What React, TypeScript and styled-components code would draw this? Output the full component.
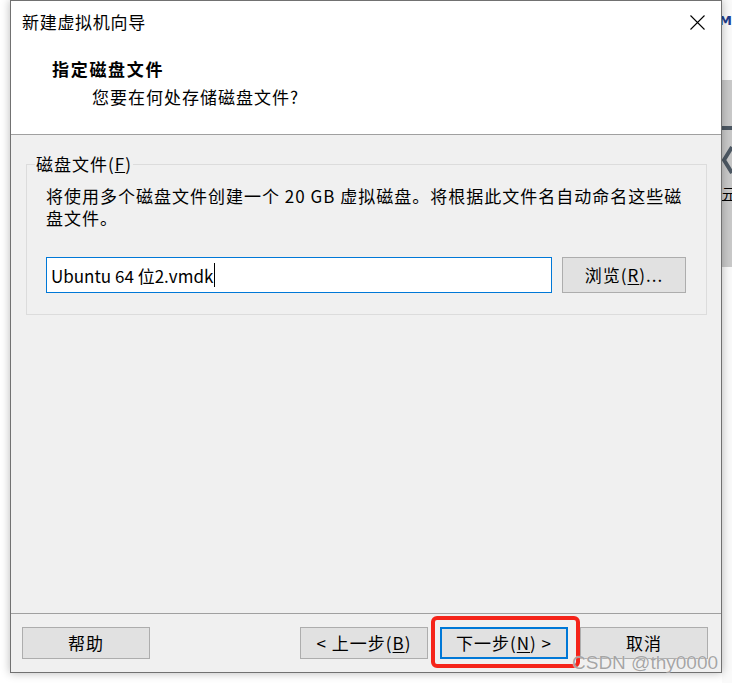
import React from "react";
import styled, { createGlobalStyle } from "styled-components";

const Global = createGlobalStyle`
  html, body { margin: 0; padding: 0; background: #ffffff; }
  body { font-family: "Noto Sans CJK SC", "Noto Sans", sans-serif; color: #000; }
  * { box-sizing: border-box; }
`;

const Page = styled.div`
  display: flex;
  width: 732px;
  height: 683px;
  padding-left: 10px;
  background: #ffffff;
  overflow: hidden;
`;

const Window = styled.div`
  position: relative;
  z-index: 1;
  flex: none;
  display: flex;
  flex-direction: column;
  width: 712px;
  height: 673px;
  border: 1px solid #717171;
  background: #f0f0f0;
  box-shadow: 0 0 9px rgba(0, 0, 0, 0.28);
`;

const Header = styled.header`
  flex: none;
  height: 134px;
  background: #ffffff;
  border-bottom: 1px solid #a0a0a0;
  display: flex;
  flex-direction: column;
`;

const TitleBar = styled.div`
  height: 42px;
  display: flex;
  align-items: center;
  justify-content: space-between;
  padding: 0 16px 0 11px;
`;

const TitleText = styled.div`
  font-size: 17px;
  letter-spacing: 0.7px;
  line-height: 42px;
`;

const CloseIcon = styled.svg`
  width: 15px;
  height: 15px;
  display: block;
`;

const StepTitle = styled.div`
  margin: 14px 0 0 41px;
  font-size: 17px;
  font-weight: 700;
  letter-spacing: 1.7px;
  line-height: 24px;
`;

const StepSubtitle = styled.div`
  margin: 4px 0 0 81px;
  font-size: 17px;
  letter-spacing: 1px;
  line-height: 24px;
`;

const Content = styled.main`
  flex: 1;
  padding: 29px 14px 0 15px;
`;

const Group = styled.section`
  display: flex;
  flex-direction: column;
  border: 1px solid #dcdcdc;
  padding: 0 19px 21px 19px;
`;

const GroupLabel = styled.div`
  align-self: flex-start;
  margin: -12px 0 0 -11px;
  padding: 0 1px;
  background: #f0f0f0;
  font-size: 17px;
  letter-spacing: 1px;
  line-height: 22px;
`;

const Description = styled.p`
  margin: 10px 0 0 0;
  font-size: 17px;
  letter-spacing: 1px;
  line-height: 22px;
  white-space: nowrap;
`;

const InputRow = styled.div`
  display: flex;
  gap: 10px;
  margin-top: 28px;
`;

const FileInput = styled.div`
  display: flex;
  align-items: center;
  width: 506px;
  height: 36px;
  padding-left: 4px;
  background: #ffffff;
  border: 1px solid #0078d7;
  font-size: 17px;
  white-space: nowrap;
`;

const Caret = styled.span`
  display: inline-block;
  width: 1px;
  height: 24px;
  margin-left: 1px;
  background: #000;
`;

const Button = styled.button<{ $width: number; $height: number; $primary?: boolean }>`
  flex: none;
  width: ${(p) => p.$width}px;
  height: ${(p) => p.$height}px;
  padding: 0;
  background: #e1e1e1;
  border: ${(p) => (p.$primary ? "2px solid #0078d7" : "1px solid #adadad")};
  font-family: "Noto Sans CJK SC", "Noto Sans", sans-serif;
  font-size: 17px;
  letter-spacing: 1px;
  color: #000;
  line-height: 20px;
  display: flex;
  align-items: center;
  justify-content: center;
  white-space: nowrap;
  u { text-underline-offset: 2px; }
`;

const Footer = styled.footer`
  flex: none;
  height: 59px;
  border-top: 1px solid #a0a0a0;
  display: flex;
  align-items: flex-start;
  gap: 12px;
  padding: 13px 13px 0 11px;
`;

const Spacer = styled.div`
  flex: 1;
`;

const Highlight = styled.div`
  position: absolute;
  left: 420px;
  top: 615px;
  width: 149px;
  height: 52px;
  border: 4px solid #f5241a;
  border-radius: 6px;
  pointer-events: none;
`;

const Watermark = styled.div`
  position: absolute;
  left: 561px;
  top: 651px;
  font-family: "Liberation Sans", Arial, sans-serif;
  font-size: 19px;
  line-height: 22px;
  color: rgba(150, 150, 150, 0.85);
  text-shadow: 0 0 1px rgba(255, 255, 255, 0.9);
  white-space: nowrap;
  pointer-events: none;
`;

const Backdrop = styled.aside`
  flex: 1;
  display: flex;
  flex-direction: column;
  overflow: hidden;
  background: #fafafa;
`;

const BackdropLogo = styled.div`
  margin-top: 13px;
  height: 15px;
  font-family: "DejaVu Sans", sans-serif;
  font-weight: 700;
  font-size: 13px;
  line-height: 15px;
  color: #1f3d8c;
  text-indent: -3px;
  white-space: nowrap;
`;

const BackdropPanel = styled.div`
  margin-top: 52px;
  height: 187px;
  background: #c9c9c9;
  display: flex;
  flex-direction: column;
`;

const BackdropBar = styled.div`
  margin-top: 46px;
  height: 4px;
  background: #4d5863;
`;

const BackdropChevron = styled.svg`
  display: block;
  margin-top: 14px;
  width: 10px;
  height: 32px;
`;

const BackdropText = styled.div`
  margin-top: 8px;
  font-size: 14px;
  line-height: 18px;
  white-space: nowrap;
  text-decoration: underline;
`;

export default function App() {
  return (
    <>
      <Global />
      <Page>
        <Window>
          <Header>
            <TitleBar>
              <TitleText>新建虚拟机向导</TitleText>
              <CloseIcon viewBox="0 0 15 15">
                <path d="M0.5 0.5 L14.5 14.5 M14.5 0.5 L0.5 14.5" stroke="#000" strokeWidth="1.1" fill="none" />
              </CloseIcon>
            </TitleBar>
            <StepTitle>指定磁盘文件</StepTitle>
            <StepSubtitle>您要在何处存储磁盘文件?</StepSubtitle>
          </Header>
          <Content>
            <Group>
              <GroupLabel>
                磁盘文件(<u>F</u>)
              </GroupLabel>
              <Description>
                将使用多个磁盘文件创建一个 20 GB 虚拟磁盘。将根据此文件名自动命名这些磁
                <br />
                盘文件。
              </Description>
              <InputRow>
                <FileInput>
                  Ubuntu 64 位2.vmdk
                  <Caret />
                </FileInput>
                <Button $width={124} $height={36}>
                  浏览(<u>R</u>)...
                </Button>
              </InputRow>
            </Group>
          </Content>
          <Footer>
            <Button $width={128} $height={32}>帮助</Button>
            <Spacer />
            <Button $width={128} $height={32}>
                &lt; 上一步(<u>B</u>)
            </Button>
            <Button $width={128} $height={32} $primary>
              下一步(<u>N</u>) &gt;
            </Button>
            <Button $width={128} $height={32}>取消</Button>
          </Footer>
          <Highlight />
          <Watermark>CSDN @thy0000</Watermark>
        </Window>
        <Backdrop>
          <BackdropLogo>M</BackdropLogo>
          <BackdropPanel>
            <BackdropBar />
            <BackdropChevron viewBox="0 0 10 32">
              <path d="M10 3 L2 16 L10 29" stroke="#4d5863" strokeWidth="4" fill="none" />
            </BackdropChevron>
            <BackdropText>元</BackdropText>
          </BackdropPanel>
        </Backdrop>
      </Page>
    </>
  );
}
